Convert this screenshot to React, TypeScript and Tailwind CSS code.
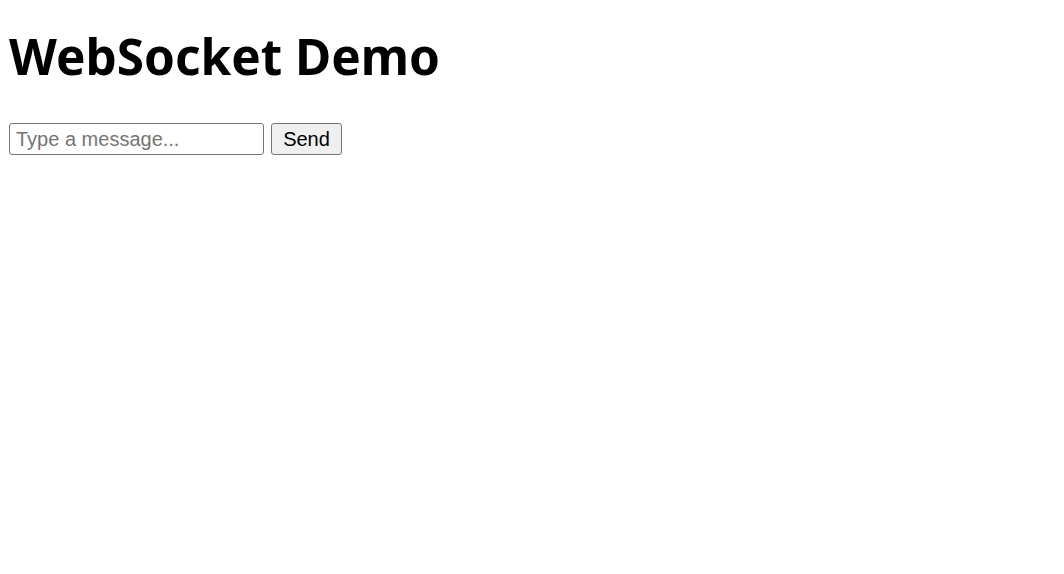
import React, { useState } from "react";

const App: React.FC = () => {
  const [message, setMessage] = useState("");

  return (
    <div className="min-h-screen bg-white px-[9px] pt-[24px]">
      <h1
        className="text-[49.5px] font-bold leading-[64px] text-black"
        style={{ fontFamily: '"Noto Sans", "Open Sans", sans-serif' }}
      >
        WebSocket Demo
      </h1>
      <div
        className="mt-[35px] flex items-center gap-[7px]"
        style={{ fontFamily: '"Liberation Sans", Arial, sans-serif' }}
      >
        <input
          type="text"
          value={message}
          onChange={(e) => setMessage(e.target.value)}
          placeholder="Type a message..."
          className="h-[32px] w-[255px] rounded-[3px] border border-[#767676] px-[6px] text-[20px] text-black placeholder:text-[#757575] outline-none"
        />
        <button className="h-[32px] w-[71px] rounded-[3px] border border-[#767676] bg-[#efefef] text-[20px] text-black">
          Send
        </button>
      </div>
    </div>
  );
};

export default App;
